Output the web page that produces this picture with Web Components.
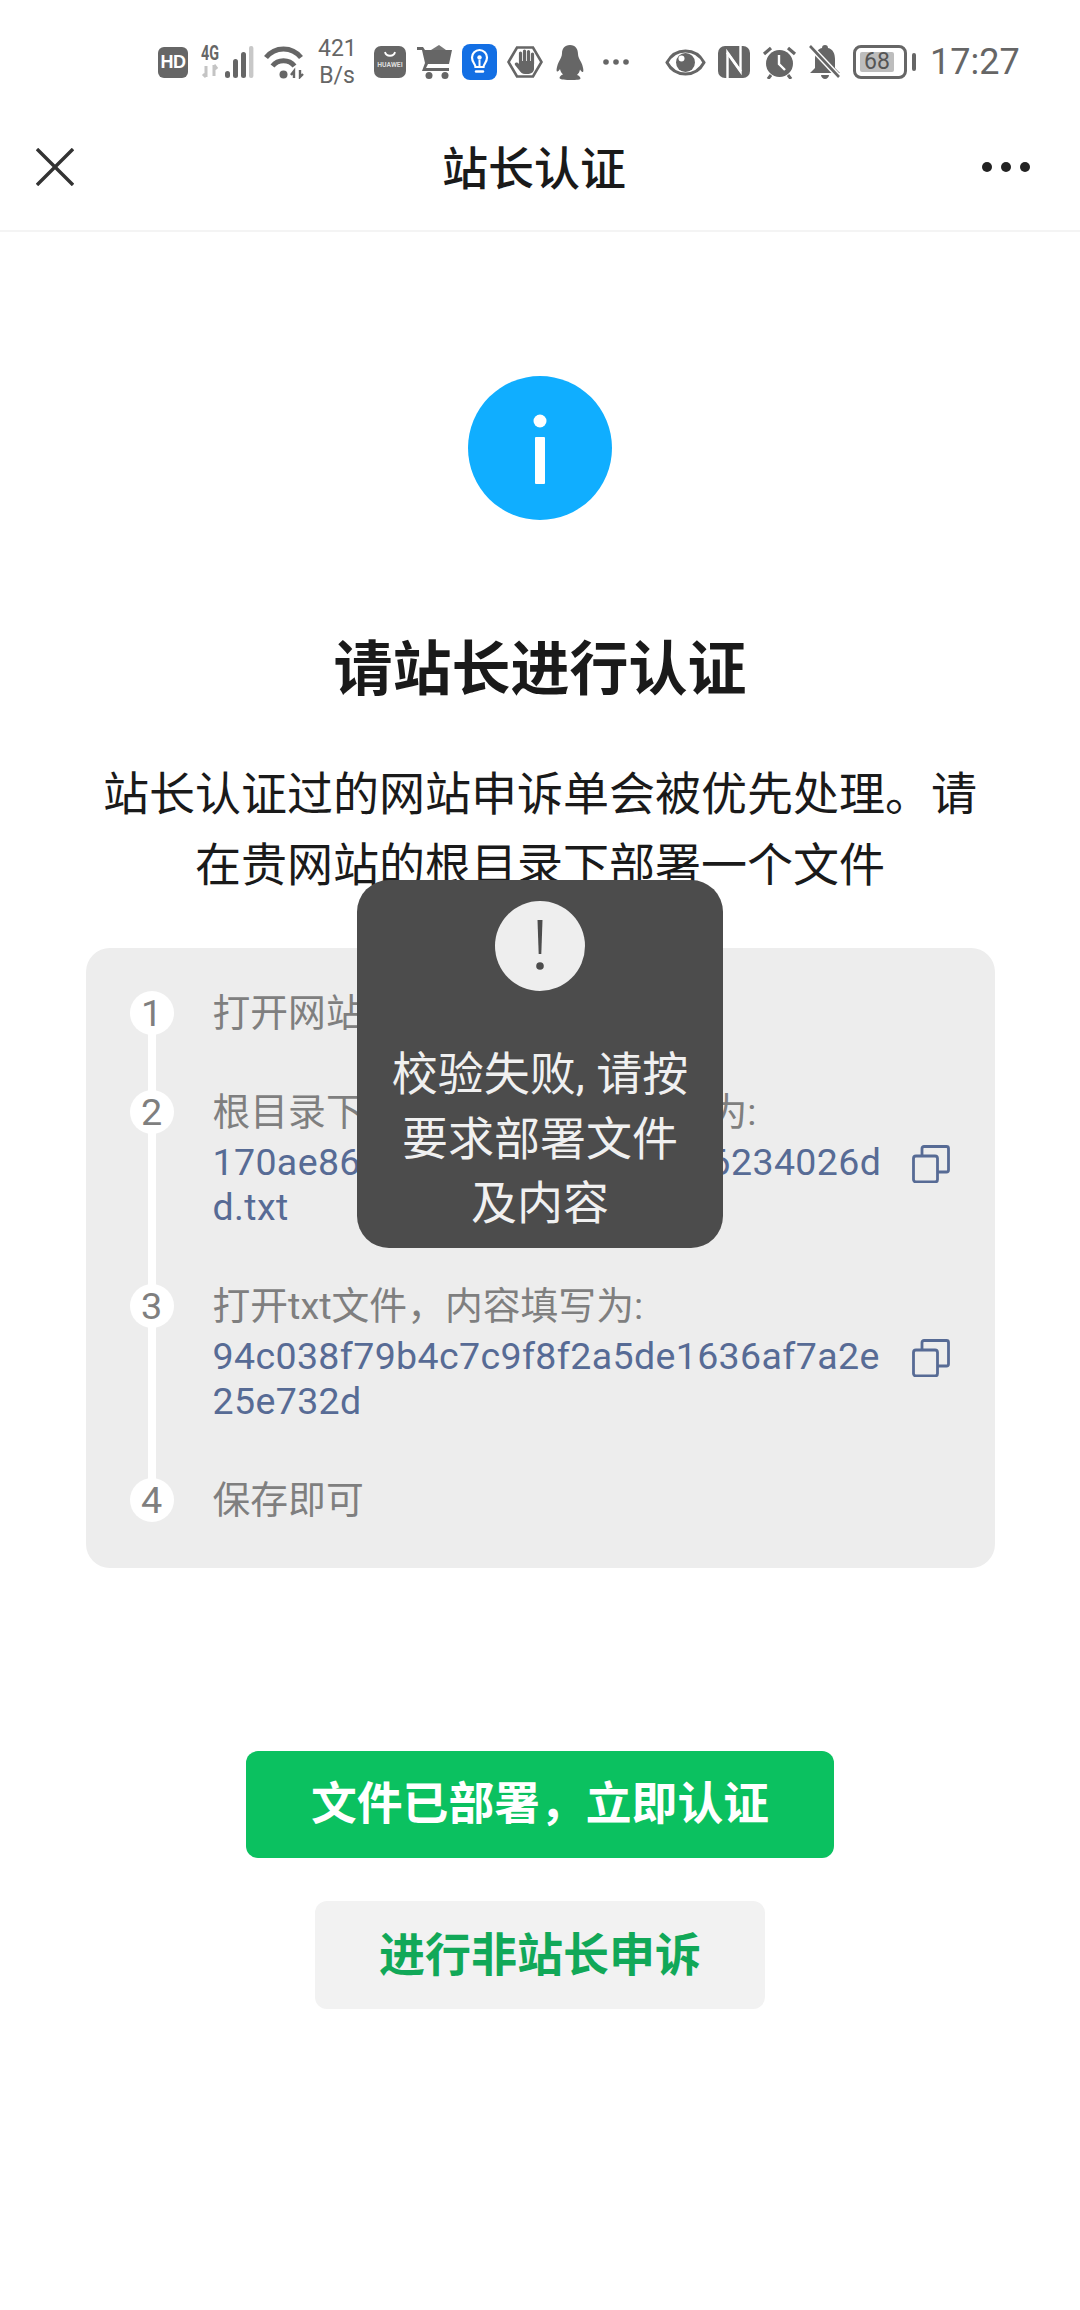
<!DOCTYPE html>
<html lang="zh">
<head>
<meta charset="utf-8">
<title>站长认证</title>
<style>
  html, body { margin: 0; padding: 0; background: #fff; }
  body { font-family: Roboto, "Noto Sans CJK SC", sans-serif; }
</style>
</head>
<body>
<verify-page></verify-page>

<script>
class StatusBar extends HTMLElement {
  connectedCallback () {
    this.attachShadow({ mode: "open" }).innerHTML = /* html */ `
    <style>
      :host {
        display: flex;
        align-items: center;
        box-sizing: border-box;
        height: 104px;
        padding: 20px 0 0 158px;
        color: #666;
        font-family: Roboto, sans-serif;
      }
      svg { display: block; flex: none; }
      text { font-family: Roboto, sans-serif; }
      .hd {
        width: 30px; height: 31px;
        border-radius: 6px;
        background: #666; color: #fff;
        font: bold 18px/31px "Liberation Sans", sans-serif;
        text-align: center;
        letter-spacing: -.5px;
      }
      .speed {
        width: 38px; margin-left: 13px;
        font-size: 23px; line-height: 27px;
        text-align: center;
        white-space: nowrap;
      }
      .battery {
        display: flex; align-items: center;
        margin-left: 12px;
      }
      .battery-body {
        box-sizing: border-box;
        display: flex;
        width: 54px; height: 34px;
        padding: 4px;
        border: 3px solid #666;
        border-radius: 8px;
      }
      .battery-level {
        width: 34px;
        background: #bdbdbd;
        border-radius: 2px;
        color: #555;
        font-size: 23px; line-height: 20px;
        text-align: center;
        white-space: nowrap;
      }
      .battery-cap { width: 4px; height: 18px; margin-left: 5px; background: #666; border-radius: 2px; }
      .time { margin-left: 14px; font-size: 36px; color: #666; white-space: nowrap; }
    </style>
    <div class="hd">HD</div>

    <svg style="margin-left:12px" width="54" height="46" viewBox="0 -6 54 46">
      <text x="1" y="15" font-size="20" font-weight="700" fill="#666" textLength="18" lengthAdjust="spacingAndGlyphs">4G</text>
      <path d="M6 21v11M3 29l3 3M14 20v11M14 20l3 4" stroke="#c4c4c4" stroke-width="3" fill="none"/>
      <rect x="25" y="26" width="5" height="7" rx="2.500" fill="#666"/>
      <rect x="33" y="14" width="5" height="19" rx="2.500" fill="#666"/>
      <rect x="41" y="7" width="5" height="26" rx="2.500" fill="#666"/>
      <rect x="49" y="1" width="4.400" height="32" rx="2" fill="#c8c8c8"/>
    </svg>

    <svg style="margin-left:10px" width="41" height="33" viewBox="0 0 41 33">
      <path d="M2 11.500C11 0 28 0 37 11.500" stroke="#666" stroke-width="5" fill="none"/>
      <path d="M8.500 20C14 13 25 13 30.500 20" stroke="#666" stroke-width="5" fill="none"/>
      <circle cx="19.500" cy="28.500" r="4" fill="#666"/>
      <path d="M30 32v-7l-3 4M36 24v7l3-3" stroke="#666" stroke-width="2.400" fill="none"/>
    </svg>

    <div class="speed">421<br>B/s</div>

    <svg style="margin-left:18px" width="32" height="32" viewBox="0 0 32 32">
      <rect width="32" height="32" rx="7" fill="#666"/>
      <path d="M11 6c1 5 9 5 10 0" stroke="#fff" stroke-width="1.800" fill="none"/>
      <text x="16" y="21" font-size="6.800" font-weight="700" fill="#ddd" text-anchor="middle">HUAWEI</text>
    </svg>

    <svg style="margin-left:11px" width="35" height="34" viewBox="0 0 35 34">
      <path d="M0 2h6l2 3h27l-3 14H11L9 23h23v3H5l3-8L5 5H0z" fill="#666"/>
      <path d="M14 5l8-5 7 5z" fill="#777"/>
      <circle cx="12" cy="30.500" r="3.500" fill="#666"/>
      <circle cx="28" cy="30.500" r="3.500" fill="#666"/>
    </svg>

    <svg style="margin-left:10px" width="35" height="36" viewBox="0 0 35 36">
      <rect width="35" height="36" rx="8" fill="#136fe4"/>
      <path d="M13.500 23c0-3-3.500-4.500-3.500-9.500a7.500 7.500 0 0 1 15 0c0 5-3.500 6.500-3.500 9.500z" stroke="#fff" stroke-width="2.200" fill="none"/>
      <path d="M17.500 23v-7" stroke="#fff" stroke-width="2"/>
      <circle cx="17.500" cy="13.500" r="2.200" fill="#fff"/>
      <path d="M14 27.500h7" stroke="#fff" stroke-width="2.400" stroke-linecap="round"/>
    </svg>

    <svg style="margin-left:10px" width="36" height="32" viewBox="0 0 36 32">
      <path d="M10 1.500h16L34.500 16 26 30.500H10L1.500 16z" stroke="#666" stroke-width="2.600" fill="none"/>
      <path d="M13.500 18V7M17.500 18V5M21.500 18V5.500M25.500 18V8" stroke="#666" stroke-width="3.200" stroke-linecap="round"/>
      <path d="M12 15h15v8c0 3-3 5-7 5h-2c-3 0-4-1.500-6-4l-4-5c-1-2 1-3 3-2l1 1z" fill="#666"/>
    </svg>

    <svg style="margin-left:13px" width="28" height="35" viewBox="0 0 28 35">
      <path d="M14 0c5.500 0 8 4 8 9 0 3 1.500 5 3 8 2 4 3 9 2 10-1 .5-2-1-3-2.500-.5 2.500-1.500 4-3 5.500 2 .5 3.500 2 3.500 3.500 0 1-3 1.500-10.500 1.500S3.500 34 3.500 33c0-1.500 1.500-3 3.500-3.500-1.500-1.500-2.500-3-3-5.500-1 1.500-2 3-3 2.500-1-1 0-6 2-10 1.500-3 3-5 3-8C6 4 8.500 0 14 0z" fill="#666"/>
    </svg>

    <svg style="margin-left:19px" width="26" height="6" viewBox="0 0 26 6">
      <circle cx="3" cy="3" r="2.800" fill="#666"/><circle cx="13" cy="3" r="2.800" fill="#666"/><circle cx="23" cy="3" r="2.800" fill="#666"/>
    </svg>

    <svg style="margin-left:36px" width="41" height="27" viewBox="0 0 41 27">
      <path d="M2 13.500C6 6 13 2 20.500 2S35 6 39 13.500C35 21 28 25 20.500 25S6 21 2 13.500z" stroke="#666" stroke-width="3" fill="none"/>
      <circle cx="20.500" cy="13.500" r="9.500" fill="#666"/>
      <circle cx="16.500" cy="9.500" r="3" fill="#fff"/>
    </svg>

    <svg style="margin-left:12px" width="32" height="32" viewBox="0 0 32 32">
      <rect width="32" height="32" rx="7" fill="#666"/>
      <path d="M9.500 32V6.500L23 25.500" stroke="#fff" stroke-width="2.400" fill="none"/>
      <path d="M22.500 0v25.500L9 6.500" stroke="#fff" stroke-width="2.400" fill="none"/>
    </svg>

    <svg style="margin-left:12px" width="35" height="33" viewBox="0 0 35 33">
      <circle cx="17.500" cy="17.500" r="13.500" fill="#666"/>
      <path d="M17 9v9l6 6" stroke="#fff" stroke-width="2.400" fill="none"/>
      <path d="M2 8l7-6M33 8l-7-6" stroke="#666" stroke-width="3.200"/>
      <path d="M9 29l-3 4M26 29l3 4" stroke="#666" stroke-width="3"/>
    </svg>

    <svg style="margin-left:12px" width="32" height="34" viewBox="0 0 32 34">
      <path d="M16 0c2 0 3 1 3 3 5 1 7 6 7 11v9l5 5H1l5-5v-9c0-5 2-10 7-11 0-2 1-3 3-3z" fill="#666"/>
      <path d="M1 1l29 31" stroke="#fff" stroke-width="5.500"/>
      <path d="M1 1l29 31" stroke="#666" stroke-width="2.600"/>
      <path d="M12 30h8c0 2-2 4-4 4s-4-2-4-4z" fill="#666"/>
    </svg>

    <div class="battery">
      <div class="battery-body"><div class="battery-level">68</div></div>
      <div class="battery-cap"></div>
    </div>
    <div class="time">17:27</div>
    `;
  }
}

class NavBar extends HTMLElement {
  connectedCallback () {
    this.attachShadow({ mode: "open" }).innerHTML = /* html */ `
    <style>
      :host {
        display: flex;
        align-items: center;
        justify-content: space-between;
        box-sizing: border-box;
        height: 128px;
        padding: 0 50px 0 36px;
        border-bottom: 2px solid #f4f4f4;
      }
      h1 {
        margin: 0 0 4px 12px;
        font-size: 46px;
        font-weight: 500;
        color: #1a1a1a;
      }
      svg { display: block; }
    </style>
    <svg width="38" height="38" viewBox="0 0 38 38">
      <path d="M1 1l36 36M37 1L1 37" stroke="#333" stroke-width="3.400"/>
    </svg>
    <h1><slot></slot></h1>
    <svg width="48" height="10" viewBox="0 0 48 10">
      <circle cx="5" cy="5" r="5" fill="#222"/><circle cx="24" cy="5" r="5" fill="#222"/><circle cx="43" cy="5" r="5" fill="#222"/>
    </svg>
    `;
  }
}

class InfoIcon extends HTMLElement {
  connectedCallback () {
    this.attachShadow({ mode: "open" }).innerHTML = /* html */ `
    <style>
      :host { display: block; width: 144px; height: 144px; }
      svg { display: block; }
    </style>
    <svg width="144" height="144" viewBox="0 0 144 144">
      <circle cx="72" cy="72" r="72" fill="#10aeff"/>
      <circle cx="72" cy="45" r="6.500" fill="#fff"/>
      <rect x="67" y="61" width="10" height="47" rx="1" fill="#fff"/>
    </svg>
    `;
  }
}

class StepList extends HTMLElement {
  connectedCallback () {
    this.attachShadow({ mode: "open" }).innerHTML = /* html */ `
    <style>
      :host {
        display: block;
        box-sizing: border-box;
        width: 909px;
        padding: 42px 40px 45px 44px;
        border-radius: 24px;
        background: #ededed;
      }
      .rail {
        display: flex;
        flex-direction: column;
        gap: 53px;
        background: linear-gradient(#fff, #fff) 18px 20px / 8px calc(100% - 40px) no-repeat;
      }
    </style>
    <div class="rail"><slot></slot></div>
    `;
  }
}

class StepItem extends HTMLElement {
  connectedCallback () {
    const code = this.getAttribute('code');
    this.attachShadow({ mode: "open" }).innerHTML = /* html */ `
    <style>
      :host {
        display: grid;
        grid-template-columns: 44px 1fr;
        column-gap: 39px;
        font-size: 37.8px;
        line-height: 46px;
        color: #7f7f7f;
      }
      .num {
        width: 44px; height: 44px;
        margin-top: 1px;
        border-radius: 50%;
        background: #fff;
        text-align: center;
        line-height: 44px;
      }
      .code {
        display: grid;
        grid-template-columns: 680px 38px;
        column-gap: 19px;
        margin-top: 5px;
        color: #576b95;
        font-size: 37.5px;
        line-height: 45px;
      }
      .code span { word-break: break-all; letter-spacing: .38px; }
      svg { display: block; margin-top: 5px; }
    </style>
    <div class="num">${this.getAttribute('num')}</div>
    <div>
      <div><slot></slot></div>
      ${code ? `<div class="code"><span>${code}</span>
        <svg width="38" height="38" viewBox="0 0 38 38" fill="none" stroke="#576b95" stroke-width="2.800">
          <rect x="1.500" y="11" width="24" height="26" rx="2.500"/>
          <path d="M10 11V3.500a2 2 0 0 1 2-2h22.500a2 2 0 0 1 2 2V25a2 2 0 0 1-2 2h-9"/>
        </svg></div>` : ''}
    </div>
    `;
  }
}

class ActionButton extends HTMLElement {
  connectedCallback () {
    this.attachShadow({ mode: "open" }).innerHTML = /* html */ `
    <style>
      :host {
        display: flex;
        align-items: center;
        justify-content: center;
        box-sizing: border-box;
        border-radius: 12px;
        font-weight: 700;
        white-space: nowrap;
      }
      :host([kind="primary"]) { width: 588px; height: 107px; padding-bottom: 9px; background: #0bc160; color: #fff; font-size: 45.8px; }
      :host([kind="plain"]) { width: 450px; height: 108px; padding-bottom: 8px; background: #f2f2f2; color: #11a858; font-size: 46px; }
    </style>
    <slot></slot>
    `;
  }
}

class ToastBox extends HTMLElement {
  connectedCallback () {
    this.attachShadow({ mode: "open" }).innerHTML = /* html */ `
    <style>
      :host {
        position: absolute;
        left: 357px;
        top: 880px;
        display: flex;
        flex-direction: column;
        align-items: center;
        box-sizing: border-box;
        width: 366px;
        height: 368px;
        padding: 21px 30px 0;
        border-radius: 32px;
        background: #4c4c4c;
        color: #f0f0f0;
        font-size: 46px;
        line-height: 64.5px;
        text-align: center;
      }
      svg { display: block; flex: none; margin-bottom: 51px; }
    </style>
    <svg width="90" height="90" viewBox="0 0 90 90">
      <circle cx="45" cy="45" r="45" fill="#eee"/>
      <path d="M42.500 19h5l-1.200 34h-2.600z" fill="#4c4c4c"/>
      <circle cx="45" cy="65" r="3.800" fill="#4c4c4c"/>
    </svg>
    <div><slot></slot></div>
    `;
  }
}

class VerifyPage extends HTMLElement {
  connectedCallback () {
    this.attachShadow({ mode: "open" }).innerHTML = /* html */ `
    <style>
      :host {
        display: block;
        position: relative;
        width: 1080px;
        height: 2310px;
        overflow: hidden;
        background: #fff;
        font-family: Roboto, "Noto Sans CJK SC", sans-serif;
      }
      main {
        display: flex;
        flex-direction: column;
        align-items: center;
        padding-top: 144px;
      }
      h2 {
        margin: 110px 0 0;
        font-size: 59px;
        line-height: 80px;
        font-weight: 700;
        color: #1a1a1a;
      }
      p {
        width: 880px;
        margin: 49px 0 47px;
        font-size: 46px;
        line-height: 71px;
        color: #1a1a1a;
        text-align: center;
      }
      .actions {
        display: flex;
        flex-direction: column;
        align-items: center;
        gap: 43px;
        margin-top: 183px;
      }
    </style>
    <status-bar></status-bar>
    <nav-bar>站长认证</nav-bar>
    <main>
      <info-icon></info-icon>
      <h2>请站长进行认证</h2>
      <p>站长认证过的网站申诉单会被优先处理。请在贵网站的根目录下部署一个文件</p>
      <step-list>
        <step-item num="1">打开网站根目录</step-item>
        <step-item num="2" code="170ae86f4f1c0e97bfd2a5fe16234026dd.txt">根目录下新建txt文件，文件名为:</step-item>
        <step-item num="3" code="94c038f79b4c7c9f8f2a5de1636af7a2e25e732d">打开txt文件，内容填写为:</step-item>
        <step-item num="4">保存即可</step-item>
      </step-list>
      <div class="actions">
        <action-button kind="primary">文件已部署，立即认证</action-button>
        <action-button kind="plain">进行非站长申诉</action-button>
      </div>
    </main>
    <toast-box>校验失败, 请按要求部署文件及内容</toast-box>
    `;
  }
}

customElements.define("status-bar", StatusBar);
customElements.define("nav-bar", NavBar);
customElements.define("info-icon", InfoIcon);
customElements.define("step-list", StepList);
customElements.define("step-item", StepItem);
customElements.define("action-button", ActionButton);
customElements.define("toast-box", ToastBox);
customElements.define("verify-page", VerifyPage);
</script>
</body>
</html>
